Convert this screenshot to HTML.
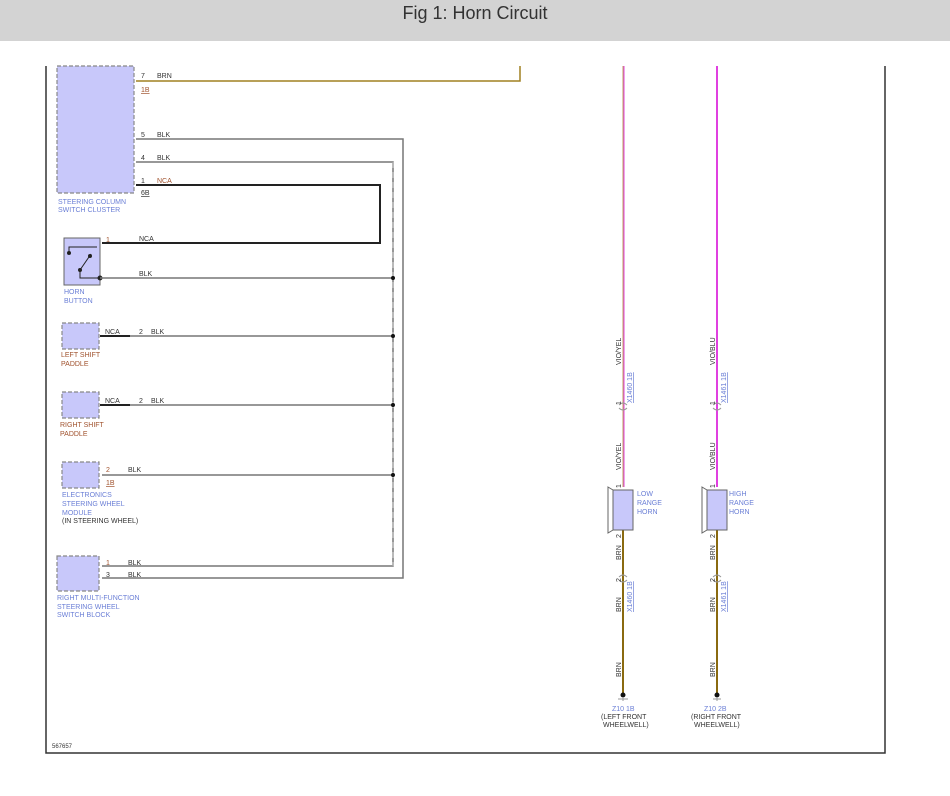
<!DOCTYPE html>
<html><head><meta charset="utf-8"><style>
html,body{margin:0;padding:0;background:#fff;width:950px;height:796px;overflow:hidden}
.hdr{position:absolute;left:0;top:0;width:950px;height:41px;background:#d3d3d3;text-align:center;font:18px "Liberation Sans",sans-serif;color:#333;line-height:26px}
svg{position:absolute;left:0;top:0}
text{font-family:"Liberation Sans",sans-serif;font-size:7px}
.b{fill:#6b7fd6}.k{fill:#333}.o{fill:#a0522d}
</style></head><body>
<div class="hdr">Fig 1: Horn Circuit</div>
<svg width="950" height="796" viewBox="0 0 950 796">
<!-- frame -->
<g stroke="#333" stroke-width="1.5" fill="none">
<path d="M46 66V753H885V66"/>
</g>
<!-- components -->
<g fill="#c8c8fa" stroke="#888" stroke-dasharray="4,2" stroke-width="1.2">
<rect x="57" y="66" width="77" height="127"/>
<rect x="62" y="323" width="37" height="26"/>
<rect x="62" y="392" width="37" height="26"/>
<rect x="62" y="462" width="37" height="26"/>
<rect x="57" y="556" width="42" height="35"/>
</g>
<rect x="64" y="238" width="36" height="47" fill="#c8c8fa" stroke="#666"/>
<g stroke="#222" stroke-width="1" fill="#222">
<path d="M69 253V247H97" fill="none"/><circle cx="69" cy="253" r="1.5"/>
<path d="M80 270L91 254" fill="none"/><circle cx="80" cy="270" r="1.5"/><circle cx="90" cy="256" r="1.5"/>
<path d="M80 270V278H100" fill="none"/><circle cx="100" cy="278" r="2"/>
</g>
<!-- wires -->
<path d="M136 81H520V66" stroke="#a08020" stroke-width="1.5" fill="none"/>
<g stroke="#777" stroke-width="1.5" fill="none">
<path d="M136 139H403V578H102"/>
<path d="M136 162H393V566H102"/>
<path d="M100 278H393"/>
<path d="M100 336H393"/><path d="M100 405H393"/><path d="M102 475H393"/>
</g>
<path d="M393 162V566" stroke="#bbb" stroke-width="1" stroke-dasharray="6,4"/>
<path d="M136 185H380V243H102" stroke="#222" stroke-width="2" fill="none"/>
<path d="M100 336H130M100 405H130" stroke="#222" stroke-width="2"/>
<g fill="#111"><circle cx="393" cy="278" r="2"/><circle cx="393" cy="336" r="2"/><circle cx="393" cy="405" r="2"/><circle cx="393" cy="475" r="2"/></g>
<!-- right wires -->
<path d="M623 66V487" stroke="#c0a060" stroke-width="1"/><path d="M624 66V487" stroke="#e040e0" stroke-width="1"/>
<path d="M717 66V487" stroke="#e040e0" stroke-width="2"/>
<path d="M623 530V693M717 530V693" stroke="#8a6a10" stroke-width="2"/>
<g fill="#c8c8fa" stroke="#666"><rect x="613" y="490" width="20" height="40"/><rect x="707" y="490" width="20" height="40"/></g>
<g fill="#fff" stroke="#666"><path d="M608 487L613 490V530L608 533Z"/><path d="M702 487L707 490V530L702 533Z"/></g>
<g fill="#111"><circle cx="623" cy="695" r="2.5"/><circle cx="717" cy="695" r="2.5"/></g>
<g stroke="#999" fill="none"><path d="M618 699H628M717 697v4M713 699H721M623 697v4"/>
<path d="M619 405q4-4 8 0M619 408q4 4 8 0M713 405q4-4 8 0M713 408q4 4 8 0M619 577q4-4 8 0M619 580q4 4 8 0M713 577q4-4 8 0M713 580q4 4 8 0"/></g>
<!-- labels -->
<text x="141" y="78" class="k">7</text><text x="157" y="78" class="k">BRN</text><text x="141" y="92" class="o" style="text-decoration:underline">1B</text>
<text x="141" y="137" class="k">5</text><text x="157" y="137" class="k">BLK</text>
<text x="141" y="160" class="k">4</text><text x="157" y="160" class="k">BLK</text>
<text x="141" y="183" class="k">1</text><text x="157" y="183" class="o">NCA</text><text x="141" y="195" class="k" style="text-decoration:underline">6B</text>
<text x="58" y="204" class="b">STEERING COLUMN</text><text x="58" y="212" class="b">SWITCH CLUSTER</text>
<text x="106" y="242" class="o">1</text><text x="139" y="241" class="k">NCA</text><text x="139" y="276" class="k">BLK</text>
<text x="64" y="294" class="b">HORN</text><text x="64" y="303" class="b">BUTTON</text>
<text x="105" y="334" class="k">NCA</text><text x="139" y="334" class="k">2</text><text x="151" y="334" class="k">BLK</text>
<text x="61" y="357" class="o">LEFT SHIFT</text><text x="61" y="366" class="o">PADDLE</text>
<text x="105" y="403" class="k">NCA</text><text x="139" y="403" class="k">2</text><text x="151" y="403" class="k">BLK</text>
<text x="60" y="427" class="o">RIGHT SHIFT</text><text x="60" y="436" class="o">PADDLE</text>
<text x="106" y="472" class="o">2</text><text x="128" y="472" class="k">BLK</text><text x="106" y="485" class="o" style="text-decoration:underline">1B</text>
<text x="62" y="497" class="b">ELECTRONICS</text><text x="62" y="506" class="b">STEERING WHEEL</text><text x="62" y="515" class="b">MODULE</text><text x="62" y="523" class="k">(IN STEERING WHEEL)</text>
<text x="106" y="565" class="o">1</text><text x="128" y="565" class="k">BLK</text><text x="106" y="577" class="k">3</text><text x="128" y="577" class="k">BLK</text>
<text x="57" y="600" class="b">RIGHT MULTI-FUNCTION</text><text x="57" y="609" class="b">STEERING WHEEL</text><text x="57" y="617" class="b">SWITCH BLOCK</text>
<text x="52" y="748" class="k" style="font-size:6px">567657</text>
<text x="637" y="496" class="b">LOW</text><text x="637" y="505" class="b">RANGE</text><text x="637" y="514" class="b">HORN</text>
<text x="729" y="496" class="b">HIGH</text><text x="729" y="505" class="b">RANGE</text><text x="729" y="514" class="b">HORN</text>
<text x="612" y="711" class="b">Z10 1B</text><text x="601" y="719" class="k">(LEFT FRONT</text><text x="603" y="727" class="k">WHEELWELL)</text>
<text x="704" y="711" class="b">Z10 2B</text><text x="691" y="719" class="k">(RIGHT FRONT</text><text x="694" y="727" class="k">WHEELWELL)</text>
<g transform="rotate(-90)">
<text x="-365" y="621" class="k">VIO/YEL</text><text x="-403" y="632" class="b" style="text-decoration:underline">X1460 1B</text><text x="-405" y="621" class="k">1</text>
<text x="-470" y="621" class="k">VIO/YEL</text><text x="-488" y="621" class="k">1</text>
<text x="-365" y="715" class="k">VIO/BLU</text><text x="-403" y="726" class="b" style="text-decoration:underline">X1461 1B</text><text x="-405" y="715" class="k">1</text>
<text x="-470" y="715" class="k">VIO/BLU</text><text x="-488" y="715" class="k">1</text>
<text x="-538" y="621" class="k">2</text><text x="-560" y="621" class="k">BRN</text><text x="-582" y="621" class="k">2</text>
<text x="-612" y="621" class="k">BRN</text><text x="-612" y="632" class="b" style="text-decoration:underline">X1460 1B</text><text x="-677" y="621" class="k">BRN</text>
<text x="-538" y="715" class="k">2</text><text x="-560" y="715" class="k">BRN</text><text x="-582" y="715" class="k">2</text>
<text x="-612" y="715" class="k">BRN</text><text x="-612" y="726" class="b" style="text-decoration:underline">X1461 1B</text><text x="-677" y="715" class="k">BRN</text>
</g>
</svg>
</body></html>
